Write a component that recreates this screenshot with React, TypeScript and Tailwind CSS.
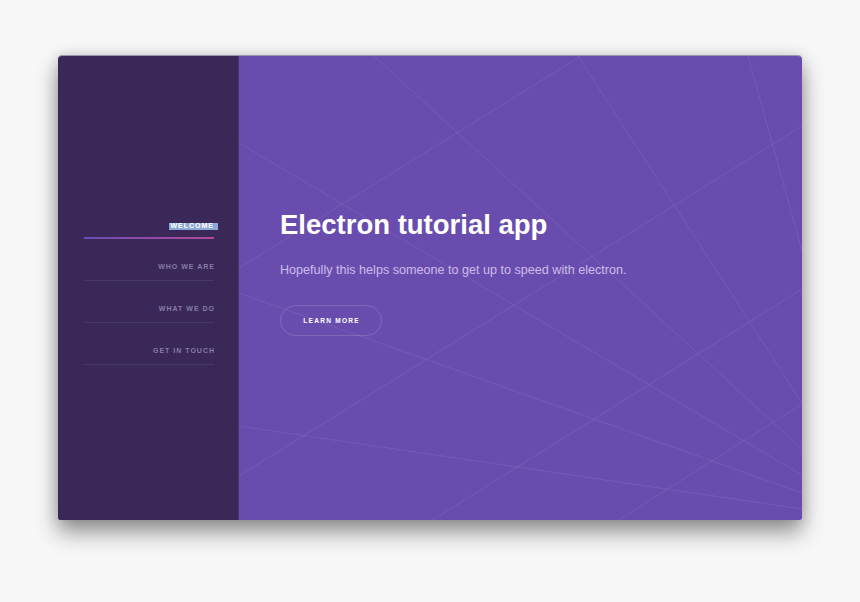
import React from "react";

const lines: [number, number, number, number][] = [
  [135, 0, 563, 393],
  [0, 87, 563, 419],
  [0, 212, 342, 0],
  [339, 0, 563, 347],
  [509, 0, 563, 195],
  [563, 70, 0, 420],
  [0, 237, 563, 437],
  [0, 370, 563, 453],
  [192, 465, 563, 233],
  [378, 465, 563, 348],
];

const navItems = ["WHO WE ARE", "WHAT WE DO", "GET IN TOUCH"];

export default function App() {
  return (
    <div
      className="w-[860px] h-[602px] bg-[#f7f7f7] pt-[55px] pl-[58px] overflow-hidden"
      style={{ fontFamily: '"Liberation Sans", Arial, sans-serif' }}
    >
      <div className="w-[744px] h-[465px] flex rounded-t-[4px] rounded-b-[2px] overflow-hidden border-t border-[#9c93ae] shadow-[0_12px_22px_rgba(0,0,0,0.42),0_0_14px_rgba(0,0,0,0.12)]">
        {/* Sidebar */}
        <div className="w-[181px] shrink-0 bg-[#3a2859] border-r border-[#46366c] pt-[142px] pl-[26px]">
          <div className="w-[130px] flex flex-col">
            <div className="pt-[25px] flex flex-col">
              <div className="h-[8px] flex justify-end items-center">
                <span className="inline-block h-[6.5px] leading-[6.5px] bg-[#8fa9d6] text-white text-[7px] font-bold tracking-[1px] pl-[1px] pr-[4px] -mr-[4px] mt-[-1px]">
                  WELCOME
                </span>
              </div>
              <div className="mt-[6px] h-[2px] bg-gradient-to-r from-[#6a4bb2] to-[#b4489a]" />
            </div>
            {navItems.map((t) => (
              <div key={t} className="pt-[24px] pb-[9px] border-b border-[#47386b]">
                <div className="h-[8px] leading-[8px] text-right text-[7px] font-bold tracking-[1px] text-[#877ca4] -mr-[1px]">
                  {t}
                </div>
              </div>
            ))}
          </div>
        </div>
        {/* Main */}
        <div className="relative flex-1 bg-[#694dae] overflow-hidden">
          <svg
            className="absolute inset-0"
            width="563"
            height="465"
            viewBox="0 0 563 465"
          >
            {lines.map(([x1, y1, x2, y2], i) => (
              <line
                key={i}
                x1={x1}
                y1={y1}
                x2={x2}
                y2={y2}
                stroke="rgba(255,255,255,0.075)"
                strokeWidth="1"
              />
            ))}
          </svg>
          <div className="relative pl-[41px] pt-[153px] flex flex-col items-start">
            <h1 className="text-[27.5px] leading-[32px] font-bold text-white">
              Electron tutorial app
            </h1>
            <p className="mt-[21px] text-[12.6px] leading-[16px] text-[#cbbde9]">
              Hopefully this helps someone to get up to speed with electron.
            </p>
            <div className="mt-[27px] w-[102px] h-[31px] rounded-full border border-white/15 flex items-center justify-center">
              <span className="text-[6.5px] leading-[8px] font-bold tracking-[1.3px] text-white pl-[1.3px]">
                LEARN MORE
              </span>
            </div>
          </div>
        </div>
      </div>
    </div>
  );
}
